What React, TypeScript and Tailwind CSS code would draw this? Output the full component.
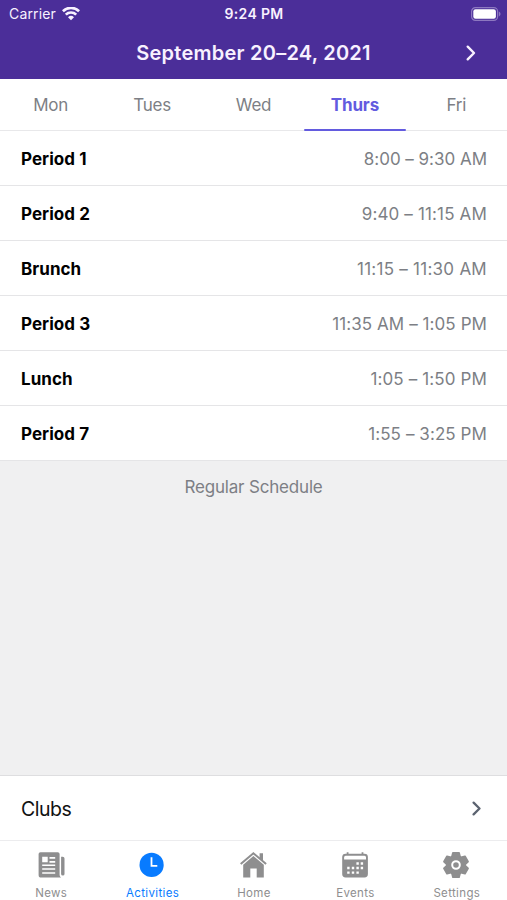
const days = ['Mon', 'Tues', 'Wed', 'Thurs', 'Fri'];

const periods = [
  { name: 'Period 1', time: '8:00 – 9:30 AM', tracking: 'tracking-[-0.02px]' },
  { name: 'Period 2', time: '9:40 – 11:15 AM', tracking: 'tracking-[0.15px]' },
  { name: 'Brunch', time: '11:15 – 11:30 AM', tracking: 'tracking-[0.26px]' },
  { name: 'Period 3', time: '11:35 AM – 1:05 PM', tracking: 'tracking-[0.08px]' },
  { name: 'Lunch', time: '1:05 – 1:50 PM', tracking: 'tracking-[0.13px]' },
  { name: 'Period 7', time: '1:55 – 3:25 PM', tracking: 'tracking-[0.08px]' },
];

const iconClass = 'size-[28px]';

function NewsIcon() {
  return (
    <svg className={iconClass} viewBox="0 0 28 28" fill="currentColor">
      <path
        fillRule="evenodd"
        d="M3.5 1.2h17.2a1.9 1.9 0 0 1 1.9 1.9v20.3c0 1.3.5 2.4 1.5 3.1H4.2a2.6 2.6 0 0 1-2.6-2.6V3.1A1.9 1.9 0 0 1 3.5 1.2ZM5.2 5.7v5.6h5.5V5.7Zm7.3.4v1.6h5.7V6.1Zm0 4v1.6h5.7v-1.6Zm-7.3 3.5v1.5h13v-1.5Zm0 3.7v1.5h13v-1.5Zm0 3.9v1.5h13v-1.5Z"
      />
      <path d="M24.1 5.7h1.6a1.8 1.8 0 0 1 1.8 1.8v15.4a1.7 1.7 0 0 1-3.4 0Z" />
    </svg>
  );
}

function ClockIcon() {
  return (
    <svg className={iconClass} viewBox="0 0 28 28">
      <circle cx="13.6" cy="13.9" r="12.1" fill="currentColor" />
      <path d="M13.5 6.2v8.7h5.8" fill="none" stroke="white" strokeWidth="1.8" />
    </svg>
  );
}

function HomeIcon() {
  return (
    <svg className={iconClass} viewBox="0 0 28 28" fill="currentColor">
      <path d="M1.7 13.1 14.4 2.3l12.7 10.8" fill="none" stroke="currentColor" strokeWidth="2" />
      <path d="M20.6 2.2H24v8.1l-3.4-2.7Z" />
      <path d="M14.4 4.9 24.8 13.8v12.7h-7.1v-9.1h-6.4v9.1H4.2V13.8Z" />
    </svg>
  );
}

function CalendarIcon() {
  return (
    <svg className={iconClass} viewBox="0 0 28 28" fill="currentColor">
      <path d="M5.7 1.2h1.8v2H5.7Zm14.9 0h1.8v2h-1.8Z" />
      <rect x="1.2" y="2.7" width="25.7" height="23.8" rx="3.4" />
      <path
        fill="white"
        d="M4.6 4.7h18.9a1.5 1.5 0 0 1 1.5 1.5v2.4H3.1V6.2a1.5 1.5 0 0 1 1.5-1.5ZM15.4 11.3h2.4v2.4h-2.4Zm4.3 0h2.4v2.4h-2.4ZM6.2 15.8h2.4v2.4H6.2Zm4.6 0h2.4v2.4h-2.4Zm4.6 0h2.4v2.4h-2.4Zm4.3 0h2.4v2.4h-2.4ZM6.2 20.4h2.4v2.4H6.2Zm4.6 0h2.4v2.4h-2.4Zm4.6 0h2.4v2.4h-2.4Z"
      />
    </svg>
  );
}

function SettingsIcon() {
  return (
    <svg className={iconClass} viewBox="0 0 28 28" fill="currentColor">
      <circle cx="14" cy="14" r="10" />
      <g stroke="currentColor" strokeWidth="1.6" strokeLinejoin="round">
        <path d="M10.9 1.8h6.2l1.3 5H9.6Zm0 24.4h6.2l1.3-5H9.6Z" />
        <path d="M10.9 1.8h6.2l1.3 5H9.6Zm0 24.4h6.2l1.3-5H9.6Z" transform="rotate(60 14 14)" />
        <path d="M10.9 1.8h6.2l1.3 5H9.6Zm0 24.4h6.2l1.3-5H9.6Z" transform="rotate(120 14 14)" />
      </g>
      <circle cx="14" cy="14" r="3.8" fill="none" stroke="white" strokeWidth="2" />
    </svg>
  );
}

const navigation = [
  { label: 'News', Icon: NewsIcon },
  { label: 'Activities', Icon: ClockIcon },
  { label: 'Home', Icon: HomeIcon },
  { label: 'Events', Icon: CalendarIcon },
  { label: 'Settings', Icon: SettingsIcon },
];

function Chevron({ className }: { className: string }) {
  return (
    <svg className={className} viewBox="0 0 10 16" fill="none" stroke="currentColor" strokeWidth="2.4" strokeLinecap="round" strokeLinejoin="round">
      <path d="M1.7 1.7 8 8l-6.3 6.3" />
    </svg>
  );
}

function Wifi() {
  return (
    <svg className="h-[14px] w-[18px]" viewBox="0 0 18 14" fill="none" stroke="currentColor" strokeWidth="2.7">
      <path d="M.9 4.2a11.6 11.6 0 0 1 16.2 0M3.8 7.6a7.5 7.5 0 0 1 10.4 0" />
      <path d="M9 13.2 6 10.2a4.3 4.3 0 0 1 6 0Z" fill="currentColor" stroke="none" />
    </svg>
  );
}

function Battery() {
  return (
    <svg className="h-[14px] w-[30px]" viewBox="0 0 30 14" fill="none">
      <rect x=".6" y=".6" width="26" height="12.8" rx="3.8" stroke="#8d78c0" strokeWidth="1.2" />
      <rect x="2.3" y="2.3" width="22.6" height="9.4" rx="2.2" fill="white" />
      <path d="M27.9 4.6c2.1.8 2.1 4 0 4.8Z" fill="#8d78c0" />
    </svg>
  );
}

export default function App() {
  return (
    <div className="flex h-[900px] w-full flex-col overflow-hidden bg-white font-['Inter',sans-serif]">
      <header className="h-[79px] shrink-0 bg-[#4b2e99] text-[#f8f1ff]">
        <div className="grid h-[27px] grid-cols-3 items-center pr-[6px] pl-[9px]">
          <div className="flex items-center gap-[6px] text-[14px] tracking-[0.15px]">
            <span>Carrier</span>
            <Wifi />
          </div>
          <span className="-ml-[2px] text-center text-[14px] font-semibold tracking-[0.35px]">9:24 PM</span>
          <div className="flex justify-end"><Battery /></div>
        </div>
        <div className="grid h-[52px] grid-cols-[50px_1fr_50px] items-center">
          <h1 className="col-start-2 text-center text-[20px] font-semibold tracking-[0.25px]">September 20–24, 2021</h1>
          <button className="ml-[9px]" aria-label="Next week"><Chevron className="h-4 w-[10px]" /></button>
        </div>
      </header>
      <nav className="grid h-[52px] shrink-0 grid-cols-5 border-b border-[#e8e8ea] text-[17px] tracking-[-0.25px] text-[#7d7f85]">
        {days.map((day) => (
          <button
            key={day}
            className={day === 'Thurs' ? 'relative pt-[2px] font-bold tracking-[-0.1px] text-[#635bdf] after:absolute after:inset-x-0 after:-bottom-px after:h-[2.5px] after:rounded-full after:bg-[#635bdf]' : 'pt-[2px]'}
          >
            {day}
          </button>
        ))}
      </nav>
      <ul className="shrink-0">
        {periods.map(({ name, time, tracking }) => (
          <li key={name} className="flex h-[55px] items-center justify-between border-b border-[#e5e5e7] px-[21px] pt-[3px]">
            <span className="text-[17px] font-bold tracking-[0.05px] text-black">{name}</span>
            <span className={`-mr-px text-[17px] text-[#7d7f85] ${tracking}`}>{time}</span>
          </li>
        ))}
      </ul>
      <main className="flex-1 bg-[#f0f0f1] pt-[14px] text-center text-[17px] leading-6 tracking-[-0.18px] text-[#7d7f85]">Regular Schedule</main>
      <button className="flex h-[65px] shrink-0 items-center justify-between border-t border-[#dedee0] pt-px pr-[26px] pl-[21px] text-left text-[20px] text-[#111]">
        <span className="pt-[3px] text-[19.5px] tracking-[-0.5px]">Clubs</span>
        <Chevron className="h-[15px] w-[9.4px] text-[#5b6370]" />
      </button>
      <nav className="grid h-[60px] shrink-0 grid-cols-5 border-t border-[#ececee] text-[11.5px] text-[#8e8e8f]">
        {navigation.map(({ label, Icon }) => (
          <button key={label} className={label === 'Activities' ? 'flex flex-col items-center pt-[10px] text-[#087bff]' : 'flex flex-col items-center pt-[10px]'}>
            <Icon />
            <span className="mt-[6px] pl-px leading-4 tracking-[0.35px]">{label}</span>
          </button>
        ))}
      </nav>
    </div>
  );
}
